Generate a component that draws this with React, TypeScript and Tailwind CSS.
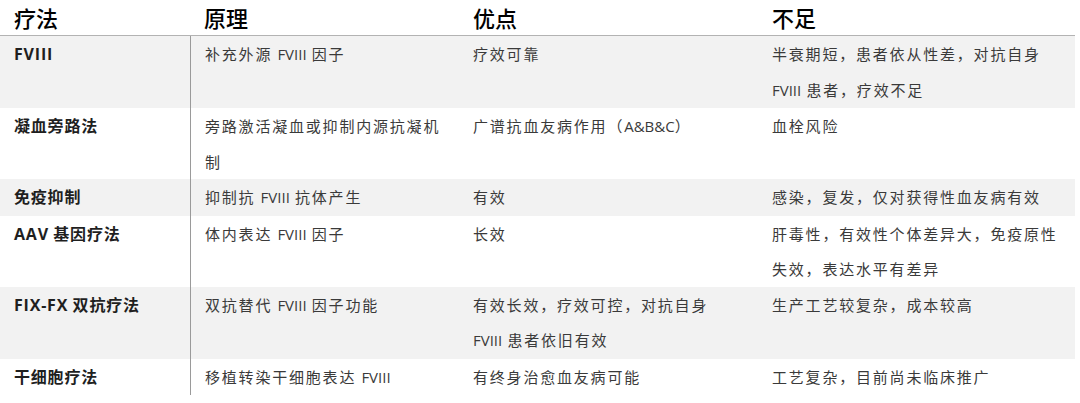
const rows: { name: string; a: string[]; b: string[]; c: string[]; gray: boolean }[] = [
  {
    name: "FVIII",
    a: ["补充外源 FVIII 因子"],
    b: ["疗效可靠"],
    c: ["半衰期短，患者依从性差，对抗自身", "FVIII 患者，疗效不足"],
    gray: true,
  },
  {
    name: "凝血旁路法",
    a: ["旁路激活凝血或抑制内源抗凝机", "制"],
    b: ["广谱抗血友病作用（A&B&C）"],
    c: ["血栓风险"],
    gray: false,
  },
  {
    name: "免疫抑制",
    a: ["抑制抗 FVIII 抗体产生"],
    b: ["有效"],
    c: ["感染，复发，仅对获得性血友病有效"],
    gray: true,
  },
  {
    name: "AAV 基因疗法",
    a: ["体内表达 FVIII 因子"],
    b: ["长效"],
    c: ["肝毒性，有效性个体差异大，免疫原性", "失效，表达水平有差异"],
    gray: false,
  },
  {
    name: "FIX-FX 双抗疗法",
    a: ["双抗替代 FVIII 因子功能"],
    b: ["有效长效，疗效可控，对抗自身", "FVIII 患者依旧有效"],
    c: ["生产工艺较复杂，成本较高"],
    gray: true,
  },
  {
    name: "干细胞疗法",
    a: ["移植转染干细胞表达 FVIII"],
    b: ["有终身治愈血友病可能"],
    c: ["工艺复杂，目前尚未临床推广"],
    gray: false,
  },
];

// latin runs get no extra tracking, like the source
function Mixed({ text, bold }: { text: string; bold?: boolean }) {
  const parts = text.split(/([A-Za-z&\-]+)/);
  return (
    <>
      {parts.map((p, i) =>
        /^[A-Za-z&\-]+$/.test(p) ? (
          <span
            key={i}
            className={bold ? "tracking-[0.8px] font-['Open_Sans',sans-serif]" : "tracking-normal font-['Open_Sans',sans-serif]"}
          >
            {p}
          </span>
        ) : (
          <span key={i}>{p}</span>
        )
      )}
    </>
  );
}

function Lines({ lines }: { lines: string[] }) {
  return (
    <>
      {lines.map((l, i) => (
        <div key={i} className="whitespace-nowrap">
          <Mixed text={l} />
        </div>
      ))}
    </>
  );
}

export default function App() {
  return (
    <div className="w-[1080px] h-[403px] bg-white font-['Noto_Sans_CJK_SC',sans-serif] overflow-hidden">
      <div className="w-[1075px]">
        {/* HEADER */}
        <div className="grid grid-cols-[190px_269px_299px_1fr] h-[36px] items-center text-[22px] font-medium text-black border-b border-[#b3b3b3]">
          <div className="pl-[14px]">疗法</div>
          <div className="pl-[14px]">原理</div>
          <div className="pl-[14px]">优点</div>
          <div className="pl-[14px]">不足</div>
        </div>

        {/* BODY */}
        {rows.map((r, i) => (
          <div
            key={i}
            className={`grid grid-cols-[190px_269px_299px_1fr] text-[15px] leading-[35.5px] tracking-[1.8px] text-[#3a3a3a] ${r.gray ? "bg-[#f2f2f2]" : "bg-white"}`}
          >
            <div className="pl-[14px] text-[16px] font-bold text-[#1f1f1f] tracking-[0.8px]">
              <Mixed text={r.name} bold />
            </div>
            <div className="pl-[14px] border-l border-[#9a9a9a]">
              <Lines lines={r.a} />
            </div>
            <div className="pl-[14px]">
              <Lines lines={r.b} />
            </div>
            <div className="pl-[14px]">
              <Lines lines={r.c} />
            </div>
          </div>
        ))}
      </div>
    </div>
  );
}
